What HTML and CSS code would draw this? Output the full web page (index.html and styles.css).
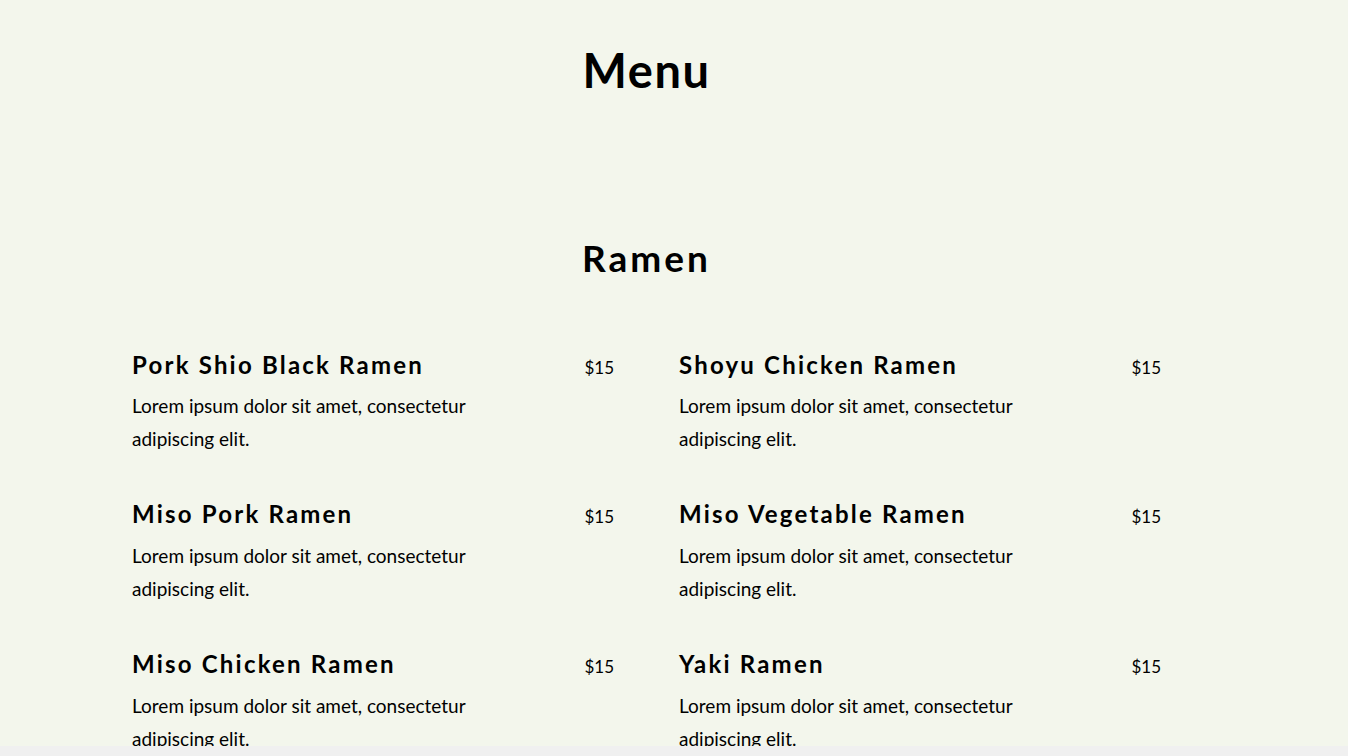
FILE: index.html
```html
<!DOCTYPE html>
<html lang="en">
<head>
<meta charset="utf-8">
<title>Menu</title>
<link rel="stylesheet" href="styles.css">
</head>
<body>
<div class="page">
  <main class="menu">
    <h1 class="menu-title">Menu</h1>
    <section class="category">
      <h2 class="category-title">Ramen</h2>
      <div class="items">
        <article class="item">
          <div class="item-head"><h3 class="item-name">Pork Shio Black Ramen</h3><span class="item-price">$15</span></div>
          <p class="item-desc">Lorem ipsum dolor sit amet, consectetur adipiscing elit.</p>
        </article>
        <article class="item">
          <div class="item-head"><h3 class="item-name">Shoyu Chicken Ramen</h3><span class="item-price">$15</span></div>
          <p class="item-desc">Lorem ipsum dolor sit amet, consectetur adipiscing elit.</p>
        </article>
        <article class="item">
          <div class="item-head"><h3 class="item-name">Miso Pork Ramen</h3><span class="item-price">$15</span></div>
          <p class="item-desc">Lorem ipsum dolor sit amet, consectetur adipiscing elit.</p>
        </article>
        <article class="item">
          <div class="item-head"><h3 class="item-name">Miso Vegetable Ramen</h3><span class="item-price">$15</span></div>
          <p class="item-desc">Lorem ipsum dolor sit amet, consectetur adipiscing elit.</p>
        </article>
        <article class="item">
          <div class="item-head"><h3 class="item-name">Miso Chicken Ramen</h3><span class="item-price">$15</span></div>
          <p class="item-desc">Lorem ipsum dolor sit amet, consectetur adipiscing elit.</p>
        </article>
        <article class="item">
          <div class="item-head"><h3 class="item-name">Yaki Ramen</h3><span class="item-price">$15</span></div>
          <p class="item-desc">Lorem ipsum dolor sit amet, consectetur adipiscing elit.</p>
        </article>
      </div>
    </section>
  </main>
</div>
<div class="bottom-bar"></div>
</body>
</html>
```
FILE: styles.css
```css
html, body {
  margin: 0;
  padding: 0;
}
body {
  background: #f3f6ec;
  color: #000;
  font-family: "Lato", "Open Sans", sans-serif;
  overflow: hidden;
}
.page {
  padding: 0 55px 0 0;
}
.menu {
  max-width: 1029px;
  margin: 0 auto;
}
.menu-title {
  margin: 0;
  padding-top: 42px;
  font-size: 47px;
  line-height: 1.2;
  font-weight: 700;
  text-align: center;
  letter-spacing: 1.5px;
}
.category {
  padding-top: 138px;
}
.category-title {
  margin: 0;
  font-size: 37px;
  line-height: 1.2;
  font-weight: 700;
  text-align: center;
  letter-spacing: 3px;
}
.items {
  display: grid;
  grid-template-columns: 1fr 1fr;
  column-gap: 65px;
  row-gap: 42px;
  margin-top: 67px;
}
.item-head {
  display: flex;
  justify-content: space-between;
  align-items: baseline;
}
.item-name {
  margin: 0;
  font-size: 24px;
  line-height: 1.4;
  font-weight: 700;
  letter-spacing: 2.2px;
}
.item-price {
  font-size: 17px;
}
.item-desc {
  margin: 8px 0 0;
  max-width: 360px;
  font-size: 19px;
  line-height: 33px;
}
.bottom-bar {
  position: fixed;
  left: 0;
  right: 0;
  bottom: 0;
  height: 10px;
  background: #f0f0f0;
}
```
